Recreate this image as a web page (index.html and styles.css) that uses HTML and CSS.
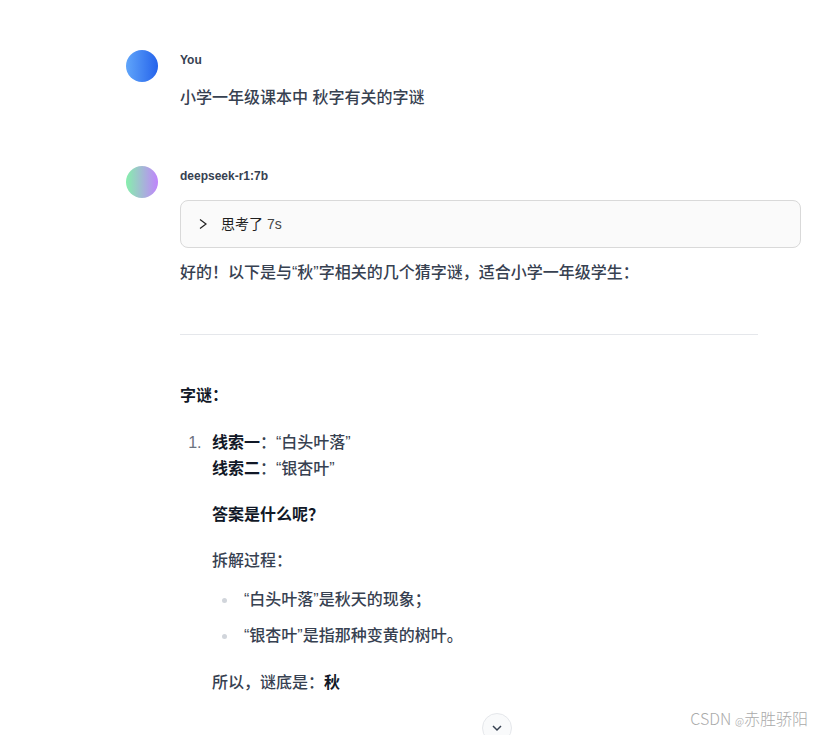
FILE: index.html
```html
<!DOCTYPE html>
<html lang="zh-CN">
<head>
<meta charset="utf-8">
<title>Chat</title>
<link rel="stylesheet" href="styles.css">
</head>
<body>
<main class="chat">
  <article class="message">
    <div class="avatar avatar-user"></div>
    <div class="body">
      <h2 class="name">You</h2>
      <div class="prose"><p>小学一年级课本中 秋字有关的字谜</p></div>
    </div>
  </article>
  <article class="message">
    <div class="avatar avatar-bot"></div>
    <div class="body">
      <h2 class="name">deepseek-r1:7b</h2>
      <button class="thinking" type="button" aria-expanded="false">
        <svg class="chevron" viewBox="0 0 12 12" aria-hidden="true"><path d="M3 1.5 9 6 3 10.5"/></svg>
        <span>思考了 <span class="seconds">7s</span></span>
      </button>
      <div class="prose">
        <p>好的！以下是与“秋”字相关的几个猜字谜，适合小学一年级学生：</p>
        <hr>
        <h3>字谜：</h3>
        <ol>
          <li>
            <p><strong>线索一</strong>：“白头叶落”<br><strong>线索二</strong>：“银杏叶”</p>
            <p><strong>答案是什么呢？</strong></p>
            <p>拆解过程：</p>
            <ul>
              <li>“白头叶落”是秋天的现象；</li>
              <li>“银杏叶”是指那种变黄的树叶。</li>
            </ul>
            <p>所以，谜底是：<strong>秋</strong></p>
          </li>
        </ol>
      </div>
    </div>
  </article>
</main>
<button class="scroll-down" type="button" aria-label="Scroll to bottom">
  <svg viewBox="0 0 16 16" aria-hidden="true"><path d="M4 6l4 4 4-4"/></svg>
</button>
<div class="watermark">CSDN <span class="at">@</span>赤胜骄阳</div>
</body>
</html>
```

FILE: styles.css
```css
* { box-sizing: border-box; }

body {
  margin: 0;
  height: 100vh;
  overflow: hidden;
  background: #fff;
  color: #374151;
  font-family: "Liberation Sans", "Noto Sans CJK SC", sans-serif;
}

.chat {
  display: flex;
  flex-direction: column;
  gap: 55px;
  padding: 50px 19px 0 126px;
}

.message { display: flex; gap: 22px; }

.avatar {
  flex: none;
  width: 32px;
  height: 32px;
  border-radius: 50%;
}
.avatar-user { background: linear-gradient(to right, #60a5fa, #2563eb); }
.avatar-bot { background: linear-gradient(to right, #86efac, #c084fc); }

.body { flex: 1; min-width: 0; }

.name {
  margin: 0;
  font-size: 12px;
  line-height: 20px;
  font-weight: 700;
  color: #374151;
}

.thinking {
  display: flex;
  align-items: center;
  gap: 12px;
  width: 100%;
  height: 48px;
  margin: 14px 0 0;
  padding: 0 16px;
  border: 1px solid #d9d9d9;
  border-radius: 8px;
  background: #fafafa;
  color: #1f1f1f;
  font: inherit;
  font-size: 14px;
  line-height: 22px;
  text-align: left;
}
.seconds { color: #444; }
.chevron {
  width: 12px;
  height: 12px;
  fill: none;
  stroke: #222;
  stroke-width: 1.2;
}

.prose {
  max-width: 578px;
  font-size: 16px;
  line-height: 26px;
  font-weight: 500;
}
.prose p { margin: 20px 0; }
.prose > p:first-child { margin: 15px 0 0; }
.thinking + .prose > p:first-child { margin-top: 12px; }
.prose strong { font-weight: 700; color: #111827; }
.prose hr { margin: 48px 0; border: 0; border-top: 1px solid #e5e7eb; }
.prose h3 { margin: 0; font-size: 16px; color: #111827; }
.prose ol { margin: 21px 0; padding-left: 26px; }
.prose ol > li { padding-left: 6px; }
.prose ol > li::marker { color: #6b7280; }
.prose ul { margin: 0 0 21px; padding-left: 26px; list-style: disc; }
.prose ul > li { margin: 10px 0; padding-left: 6px; }
.prose ul > li::marker { color: #d1d5db; }
.prose li > p:has(+ ul) { margin-bottom: 13px; }
.prose ul > li:first-child { margin-top: 0; }
.prose ul > li:last-child { margin-bottom: 0; }

.scroll-down {
  position: absolute;
  left: 482px;
  top: 713px;
  display: grid;
  place-items: center;
  width: 30px;
  height: 30px;
  padding: 0;
  border: 1px solid #e5e7eb;
  border-radius: 50%;
  background: #f9fafb;
}
.scroll-down svg { width: 16px; height: 16px; fill: none; stroke: #374151; stroke-width: 1.5; }

.watermark {
  position: absolute;
  right: 12px;
  bottom: 4px;
  color: #aaa;
  font-family: "Noto Sans CJK SC", sans-serif;
  font-size: 16px;
  line-height: 20px;
  font-weight: 300;
}
.at { font-size: 10px; }
```
